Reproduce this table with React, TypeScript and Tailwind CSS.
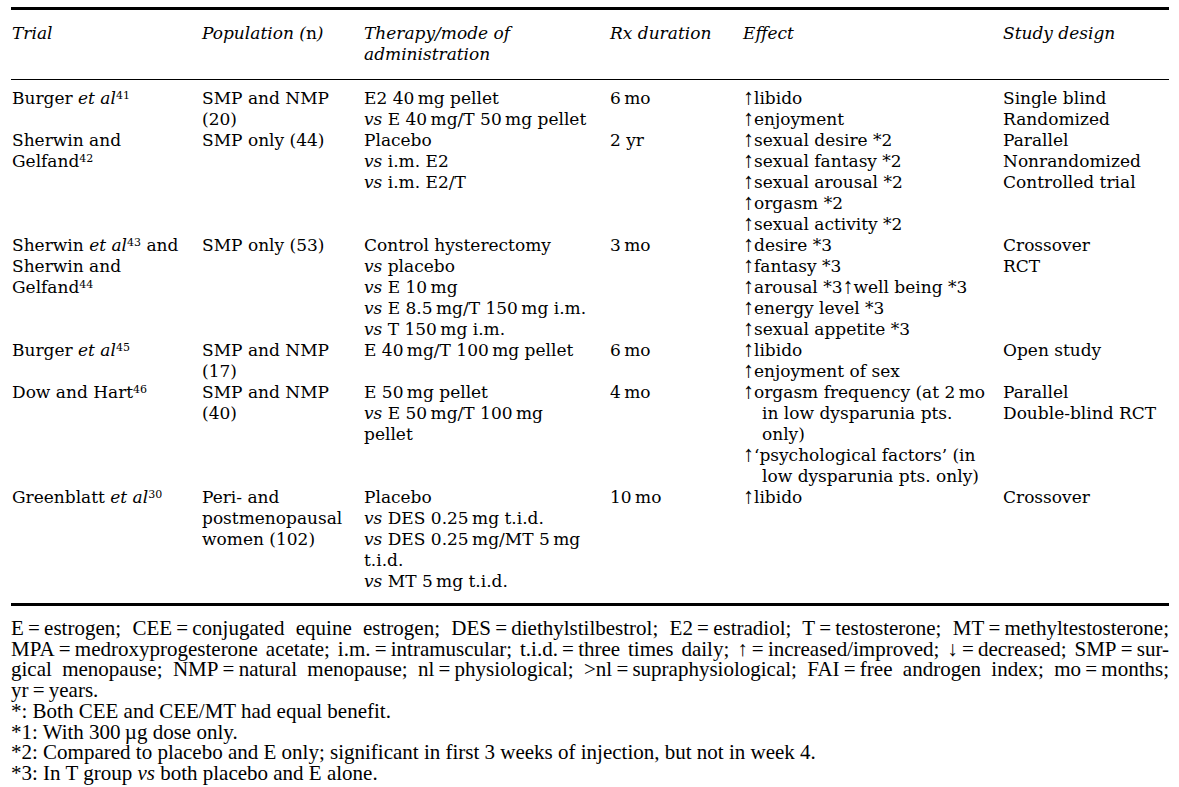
import React from "react";

const A = () => (
  <span className="font-['Liberation_Serif',serif] text-[22px] leading-[0] not-italic">↑</span>
);
const S = ({ children }: { children: React.ReactNode }) => (
  <sup className="text-[11px] not-italic">{children}</sup>
);
const V = () => <i>vs</i>;
const T = "\u2009";

type Line = React.ReactNode;
type Row = Line[][];

const rows: Row[] = [
  [
    [<>Burger <i>et al</i><S>41</S></>],
    ["SMP and NMP", "(20)"],
    [`E2 40${T}mg pellet`, <><V /> E 40{T}mg/T 50{T}mg pellet</>],
    [`6${T}mo`],
    [<><A />libido</>, <><A />enjoyment</>],
    ["Single blind", "Randomized"],
  ],
  [
    ["Sherwin and", <>Gelfand<S>42</S></>],
    ["SMP only (44)"],
    ["Placebo", <><V /> i.m. E2</>, <><V /> i.m. E2/T</>],
    ["2 yr"],
    [
      <><A />sexual desire *2</>,
      <><A />sexual fantasy *2</>,
      <><A />sexual arousal *2</>,
      <><A />orgasm *2</>,
      <><A />sexual activity *2</>,
    ],
    ["Parallel", "Nonrandomized", "Controlled trial"],
  ],
  [
    [<>Sherwin <i>et al</i><S>43</S> and</>, "Sherwin and", <>Gelfand<S>44</S></>],
    ["SMP only (53)"],
    [
      "Control hysterectomy",
      <><V /> placebo</>,
      <><V /> E 10{T}mg</>,
      <><V /> E 8.5{T}mg/T 150{T}mg i.m.</>,
      <><V /> T 150{T}mg i.m.</>,
    ],
    [`3${T}mo`],
    [
      <><A />desire *3</>,
      <><A />fantasy *3</>,
      <><A />arousal *3<A />well being *3</>,
      <><A />energy level *3</>,
      <><A />sexual appetite *3</>,
    ],
    ["Crossover", "RCT"],
  ],
  [
    [<>Burger <i>et al</i><S>45</S></>],
    ["SMP and NMP", "(17)"],
    [`E 40${T}mg/T 100${T}mg pellet`],
    [`6${T}mo`],
    [<><A />libido</>, <><A />enjoyment of sex</>],
    ["Open study"],
  ],
  [
    [<>Dow and Hart<S>46</S></>],
    ["SMP and NMP", "(40)"],
    [`E 50${T}mg pellet`, <><V /> E 50{T}mg/T 100{T}mg</>, "pellet"],
    [`4${T}mo`],
    [
      <><A />orgasm frequency (at 2{T}mo</>,
      <span className="pl-[19px]">in low dysparunia pts.</span>,
      <span className="pl-[19px]">only)</span>,
      <><A />‘psychological factors’ (in</>,
      <span className="pl-[19px]">low dysparunia pts. only)</span>,
    ],
    ["Parallel", "Double-blind RCT"],
  ],
  [
    [<>Greenblatt <i>et al</i><S>30</S></>],
    ["Peri- and", "postmenopausal", "women (102)"],
    [
      "Placebo",
      <><V /> DES 0.25{T}mg t.i.d.</>,
      <><V /> DES 0.25{T}mg/MT 5{T}mg</>,
      "t.i.d.",
      <><V /> MT 5{T}mg t.i.d.</>,
    ],
    [`10${T}mo`],
    [<><A />libido</>],
    ["Crossover"],
  ],
];

const grid = "grid grid-cols-[191px_162px_246px_133px_260px_166px]";

function Cell({ lines, first }: { lines: Line[]; first?: boolean }) {
  return (
    <div className={first ? "pl-[1px]" : ""}>
      {lines.map((l, i) => (
        <div key={i} className="whitespace-nowrap leading-[21px] h-[21px]">
          {l}
        </div>
      ))}
    </div>
  );
}

const eq = (a: string, b: string) => `${a}\u2009=\u2009${b}`;

export default function App() {
  return (
    <div className="w-[1179px] h-[787px] bg-white text-black pt-[7px] pl-[11px] overflow-hidden">
      <div className="w-[1158px] border-t-[3px] border-black font-['DejaVu_Serif',serif] text-[17px]">
        <div className={`${grid} pt-[13px] pb-[14px] border-b border-black italic`}>
          <Cell first lines={["Trial"]} />
          <Cell lines={[<>Population (<span className="not-italic">n</span>)</>]} />
          <Cell lines={["Therapy/mode of", "administration"]} />
          <Cell lines={["Rx duration"]} />
          <Cell lines={["Effect"]} />
          <Cell lines={["Study design"]} />
        </div>
        <div className="pt-[8px] pb-[11px] border-b-[3px] border-black">
          {rows.map((r, i) => (
            <div key={i} className={grid}>
              {r.map((c, j) => (
                <Cell key={j} lines={c} first={j === 0} />
              ))}
            </div>
          ))}
        </div>
      </div>
      <div className="w-[1158px] pt-[12px] font-['Liberation_Serif',serif] text-[21px] leading-[20.7px]">
        <div className="text-justify [text-align-last:justify]">
          {[
            eq("E", "estrogen;"),
            eq("CEE", "conjugated"),
            "equine",
            "estrogen;",
            eq("DES", "diethylstilbestrol;"),
            eq("E2", "estradiol;"),
            eq("T", "testosterone;"),
            eq("MT", "methyltestosterone;"),
          ].join(" ")}
        </div>
        <div className="text-justify [text-align-last:justify]">
          {[
            eq("MPA", "medroxyprogesterone"),
            "acetate;",
            eq("i.m.", "intramuscular;"),
            eq("t.i.d.", "three"),
            "times",
            "daily;",
            eq("↑", "increased/improved;"),
            eq("↓", "decreased;"),
            eq("SMP", "sur-"),
          ].join(" ")}
        </div>
        <div className="text-justify [text-align-last:justify]">
          {[
            "gical",
            "menopause;",
            eq("NMP", "natural"),
            "menopause;",
            eq("nl", "physiological;"),
            eq(">nl", "supraphysiological;"),
            eq("FAI", "free"),
            "androgen",
            "index;",
            eq("mo", "months;"),
          ].join(" ")}
        </div>
        <div>{eq("yr", "years.")}</div>
        <div>*: Both CEE and CEE/MT had equal benefit.</div>
        <div>*1: With 300{"\u2009"}µg dose only.</div>
        <div>
          *2: Compared to placebo and E only; significant in first 3 weeks of injection, but not in week 4.
        </div>
        <div>
          *3: In T group <i>vs</i> both placebo and E alone.
        </div>
      </div>
    </div>
  );
}
